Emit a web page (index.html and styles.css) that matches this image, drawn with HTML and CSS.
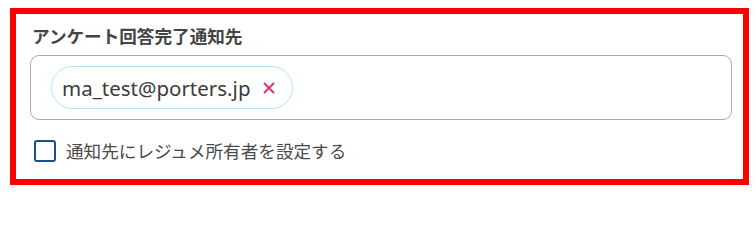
FILE: index.html
```html
<!DOCTYPE html>
<html lang="ja">
<head>
<meta charset="utf-8">
<link rel="stylesheet" href="styles.css">
</head>
<body>
<div class="frame">
  <div class="label">アンケート回答完了通知先</div>
  <div class="input">
    <span class="chip">
      <span class="chip-text">ma_test@porters.jp</span>
      <svg class="chip-x" width="12" height="12" viewBox="0 0 12 12" aria-hidden="true">
        <path d="M1 1 L11 11 M11 1 L1 11" stroke="#e0337a" stroke-width="2" stroke-linecap="butt" fill="none"/>
      </svg>
    </span>
  </div>
  <label class="check">
    <span class="box"></span>
    <span class="check-text">通知先にレジュメ所有者を設定する</span>
  </label>
</div>
</body>
</html>
```

FILE: styles.css
```css
html, body {
  margin: 0;
  padding: 0;
  background: #ffffff;
}
body {
  font-family: "Noto Sans", "Noto Sans CJK JP", sans-serif;
  color: #3c3c3c;
}
.frame {
  box-sizing: border-box;
  width: 739px;
  height: 177px;
  margin: 8px 0 0 10px;
  border: 6px solid #ff0000;
  padding: 10px 11px 0 14px;
}
.label {
  font-family: "Noto Sans CJK JP", sans-serif;
  font-weight: 700;
  font-size: 17.6px;
  line-height: 24px;
  color: #444444;
  padding-left: 2px;
}
.input {
  box-sizing: border-box;
  margin-top: 7px;
  height: 65px;
  border: 1px solid #ababab;
  border-radius: 9px;
  padding: 10px 20px;
  display: flex;
  align-items: center;
}
.chip {
  box-sizing: border-box;
  height: 43px;
  display: inline-flex;
  align-items: center;
  border: 1px solid #b8e2f6;
  border-radius: 22px;
  padding: 0 17px 0 10px;
}
.chip-text {
  font-size: 20.5px;
  line-height: 28px;
  color: #3c3c3c;
}
.chip-x {
  display: block;
  margin-left: 12px;
}
.check {
  display: flex;
  align-items: center;
  margin-top: 19px;
  margin-left: 4px;
}
.box {
  box-sizing: border-box;
  width: 22px;
  height: 22px;
  border: 2px solid #1c4e8a;
  border-radius: 3px;
}
.check-text {
  font-family: "Noto Sans CJK JP", sans-serif;
  font-size: 17.6px;
  line-height: 24px;
  color: #4a4a4a;
  margin-left: 10px;
}
```
